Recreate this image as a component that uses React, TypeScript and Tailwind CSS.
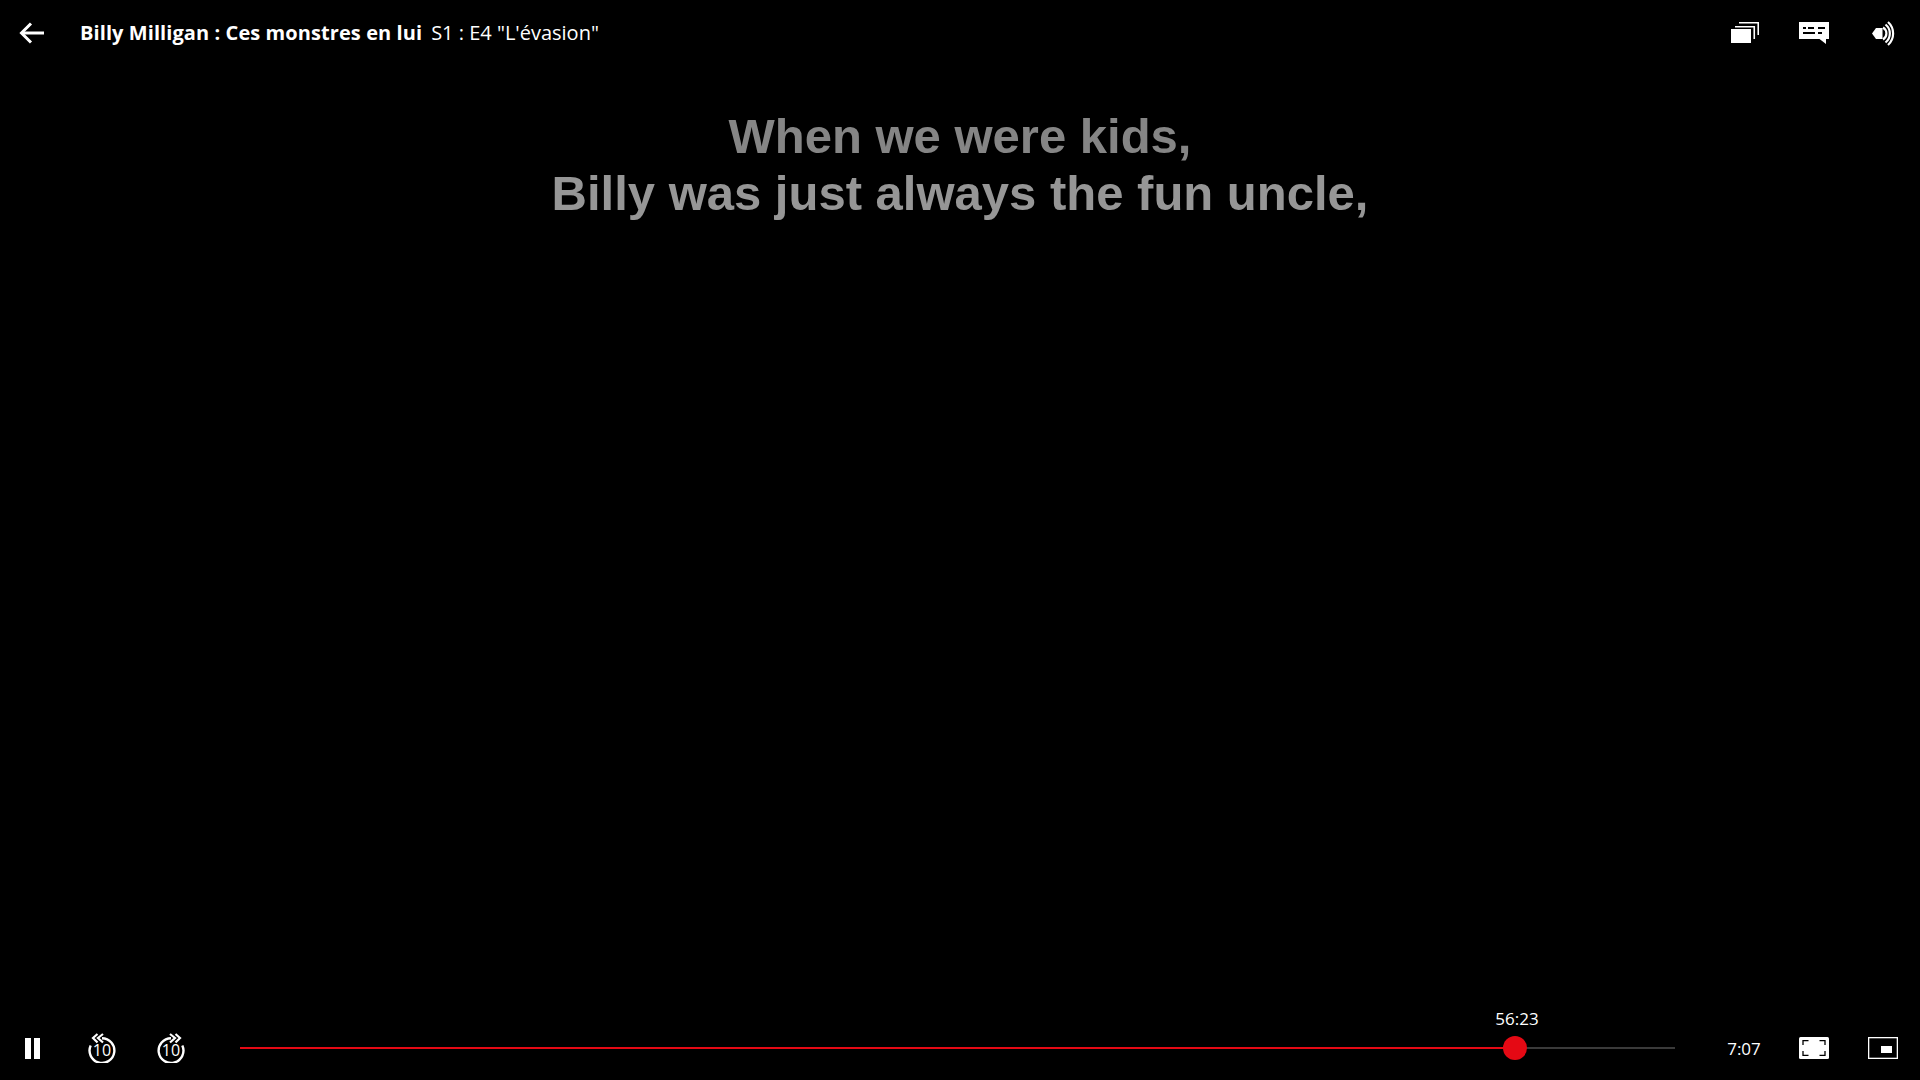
import React from "react";

const IconButton: React.FC<{ children: React.ReactNode }> = ({ children }) => (
  <button className="flex h-[64px] w-[64px] shrink-0 items-center justify-center text-white">{children}</button>
);

const BackIcon = () => (
  <svg width="26" height="22" viewBox="0 0 26 22" fill="none" stroke="white" strokeWidth="3">
    <path d="M25 11H3" />
    <path d="M12 1.5 2.5 11l9.5 9.5" />
  </svg>
);

const EpisodesIcon = () => (
  <svg className="-translate-y-px" width="28" height="22" viewBox="0 0 28 22" fill="none">
    <rect x="0" y="8" width="20" height="14" fill="white" />
    <path d="M4 5.75H23.25V18" stroke="white" strokeWidth="1.6" />
    <path d="M8 1.75H27.25V14" stroke="white" strokeWidth="1.6" />
  </svg>
);

const SubtitlesIcon = () => (
  <svg width="30" height="22" viewBox="0 0 30 22">
    <path d="M0 0H30V17H27V22L20.5 17H0Z" fill="white" />
    <path d="M4 5H7V7H4ZM9 5H15V7H9ZM19 5H26V7H19ZM4 10H16V12H4ZM19 10H23V12H19Z" fill="black" />
  </svg>
);

const VolumeIcon = () => (
  <svg width="23" height="25" viewBox="0 0 23 25" fill="none">
    <path d="M0 12.5 4 7H10.5V18H4Z" fill="white" />
    <path d="M11 6.5a7 7 0 0 1 0 12" stroke="white" strokeWidth="2.2" />
    <path d="M13.5 3.5a11.5 11.5 0 0 1 0 18" stroke="white" strokeWidth="2.2" />
    <path d="M16 1a15.5 15.5 0 0 1 0 23" stroke="white" strokeWidth="2.2" />
  </svg>
);

const PauseIcon = () => (
  <svg width="15" height="21" viewBox="0 0 15 21" fill="white">
    <rect x="0" y="0" width="6" height="21" />
    <rect x="9" y="0" width="6" height="21" />
  </svg>
);

const SeekIcon: React.FC<{ forward?: boolean }> = ({ forward }) => (
  <svg width="28" height="30" viewBox="0 0 28 30" fill="none">
    <g stroke="white" strokeWidth="2.2" transform={forward ? "matrix(-1 0 0 1 28 0)" : undefined}>
      <path d="M14 5.2a12.4 12.4 0 1 1-11.3 7.2" strokeWidth="2.4" />
      <path d="M15 1 10 5l5 4.5" />
      <path d="M9.5 1 5 5l4.5 4.5" />
    </g>
    <text x="14" y="23.2" textAnchor="middle" fill="white" fontSize="16" fontFamily="'Open Sans', sans-serif">
      10
    </text>
  </svg>
);

const FullscreenIcon = () => (
  <svg width="30" height="22" viewBox="0 0 30 22">
    <rect x="0" y="0" width="30" height="22" rx="1.5" fill="white" />
    <path d="M4 8V3.6H9.5M20.5 3.6H26V8M26 14V18.4H20.5M9.5 18.4H4V14" fill="none" stroke="black" strokeWidth="1.3" />
  </svg>
);

const PipIcon = () => (
  <svg width="30" height="22" viewBox="0 0 30 22" fill="none">
    <rect x="0.65" y="0.65" width="28.7" height="20.7" stroke="white" strokeWidth="1.3" />
    <rect x="13" y="9" width="11" height="7" fill="white" />
  </svg>
);

export default function App() {
  return (
    <div className="flex h-screen w-full flex-col overflow-hidden bg-black font-['Open_Sans',sans-serif] text-white">
      <header className="flex h-[66px] shrink-0 items-center">
        <IconButton>
          <BackIcon />
        </IconButton>
        <h1 className="ml-4 whitespace-nowrap text-[20px] font-bold tracking-[0.08px]">
          Billy Milligan : Ces monstres en lui
          <span className="ml-[9px] font-normal tracking-normal">S1 : E4 "L'évasion"</span>
        </h1>
        <div className="ml-auto flex gap-[5px] pr-[5px]">
          <IconButton>
            <EpisodesIcon />
          </IconButton>
          <IconButton>
            <SubtitlesIcon />
          </IconButton>
          <IconButton>
            <VolumeIcon />
          </IconButton>
        </div>
      </header>

      <main className="flex-1 pt-[42px] text-center font-['Liberation_Sans',sans-serif] text-[49px] font-bold leading-[57px]">
        <p className="text-[#858585]">When we were kids,</p>
        <p className="text-[#969696]">Billy was just always the fun uncle,</p>
      </main>

      <footer className="flex h-[64px] shrink-0 items-center">
        <div className="flex gap-[5.5px]">
          <IconButton>
            <PauseIcon />
          </IconButton>
          <IconButton>
            <SeekIcon />
          </IconButton>
          <IconButton>
            <SeekIcon forward />
          </IconButton>
        </div>

        <div className="relative ml-[37px] flex h-[2px] w-[1435px] bg-[#3a3a3a]">
          <div className="h-full w-[1275px] bg-[#e50914]" />
          <div className="absolute left-[1263px] top-[-11px] h-6 w-6 rounded-full bg-[#e50914]" />
          <span className="absolute left-[1277px] top-[-38px] -translate-x-1/2 text-[17px] leading-[20px]">56:23</span>
        </div>

        <div className="ml-auto flex items-center gap-[5px] pr-[5px]">
          <span className="w-[64px] -translate-x-px translate-y-px text-center text-[17px]">7:07</span>
          <IconButton>
            <FullscreenIcon />
          </IconButton>
          <IconButton>
            <PipIcon />
          </IconButton>
        </div>
      </footer>
    </div>
  );
}
